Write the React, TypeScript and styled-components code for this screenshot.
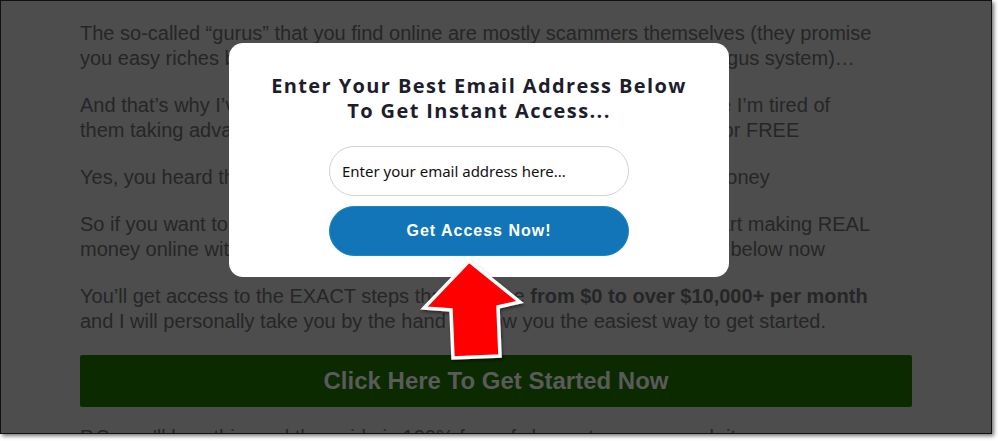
import React from 'react';
import styled, { createGlobalStyle } from 'styled-components';

const App = () => {
  return (
    <>
      <GlobalStyle />
      <Frame>
        <Content>
          <Para>
            The so-called “gurus” that you find online are mostly scammers themselves (they promise
            <br />
            you easy riches but instead they just want to sell you some overpriced bogus system)…
          </Para>
          <Para>
            And that’s why I’ve decided to step in and help out folks like you, because I’m tired of
            <br />
            them taking advantage of people, so I’m going to show you exactly how for FREE
          </Para>
          <Para>Yes, you heard that right, I’m going to show you precisely how to make money</Para>
          <Para>
            So if you want to stop wasting your time and money on fluff and finally start making REAL
            <br />
            money online without all the BS then all you have to do is click the button below now
          </Para>
          <Para>
            You’ll get access to the EXACT steps that took me <b>from $0 to over $10,000+ per month</b>
            <br />
            and I will personally take you by the hand &amp; show you the easiest way to get started.
          </Para>
          <GreenButton>Click Here To Get Started Now</GreenButton>
          <PostScript>P.S. you'll love this, and the guide is 100% free of charge to you, so grab it</PostScript>
        </Content>

        <Modal>
          <ModalTitle>
            Enter Your Best Email Address Below
            <br />
            To Get Instant Access...
          </ModalTitle>
          <EmailInput placeholder="Enter your email address here..." />
          <AccessButton>Get Access Now!</AccessButton>
        </Modal>

        <Arrow width="110" height="110" viewBox="0 0 110 110">
          <defs>
            <filter id="sh" x="-20%" y="-20%" width="140%" height="140%">
              <feDropShadow dx="1" dy="2" stdDeviation="1.5" floodColor="#000" floodOpacity="0.45" />
            </filter>
          </defs>
          <polygon
            points="54,6 105,47 83,52 85,101 38,103 36,55 9,53"
            fill="#ff0000"
            stroke="#ffffff"
            strokeWidth="3.5"
            strokeLinejoin="miter"
            filter="url(#sh)"
          />
        </Arrow>
      </Frame>
    </>
  );
}

export default App;

const GlobalStyle = createGlobalStyle`
  html, body {
    margin: 0;
    padding: 0;
    background: #ffffff;
  }
  body {
    width: 998px;
    height: 441px;
    overflow: hidden;
  }
`

const Frame = styled.div`
  position: relative;
  width: 992px;
  height: 434px;
  box-sizing: border-box;
  border: 1px solid #111;
  background: #4d4d4d;
  overflow: hidden;
  box-shadow: 2px 2px 4px rgba(0, 0, 0, 0.55);
`

const Content = styled.div`
  width: 832px;
  padding: 20px 0 0 79px;
  display: flex;
  flex-direction: column;
  gap: 22px;
`

const Para = styled.p`
  margin: 0;
  font-family: "Liberation Sans", Arial, sans-serif;
  font-size: 20px;
  line-height: 25px;
  color: #262626;
  white-space: nowrap;

  b {
    font-weight: 700;
  }
`

const PostScript = styled(Para)`
  margin-top: -4px;
`

const GreenButton = styled.div`
  height: 52px;
  margin-top: -1px;
  border-radius: 2px;
  background: #0b2a00;
  display: flex;
  align-items: center;
  justify-content: center;
  font-family: "Liberation Sans", Arial, sans-serif;
  font-weight: 700;
  font-size: 24px;
  color: #5a5a5a;
`

const Modal = styled.div`
  position: absolute;
  left: 228px;
  top: 42px;
  width: 500px;
  height: 234px;
  box-sizing: border-box;
  background: #ffffff;
  border-radius: 14px;
  display: flex;
  flex-direction: column;
  align-items: center;
  padding-top: 30px;
`

const ModalTitle = styled.h2`
  margin: 0 0 23px;
  font-family: "Open Sans", "Noto Sans", sans-serif;
  font-weight: 700;
  font-size: 20px;
  line-height: 25px;
  letter-spacing: 1.4px;
  text-align: center;
  color: #1d1d2c;
`

const EmailInput = styled.input`
  width: 300px;
  height: 50px;
  box-sizing: border-box;
  border: 1px solid #d2d2d2;
  border-radius: 25px;
  padding: 0 12px;
  margin-bottom: 10px;
  font-family: "Noto Sans", "Open Sans", sans-serif;
  font-size: 15px;
  color: #111;
  outline: none;

  &::placeholder {
    color: #111;
    opacity: 1;
  }
`

const AccessButton = styled.button`
  width: 300px;
  height: 50px;
  border: 1px solid #1589c4;
  border-radius: 25px;
  background: #1175b7;
  color: #ffffff;
  font-family: "Liberation Sans", Arial, sans-serif;
  font-weight: 700;
  font-size: 16px;
  letter-spacing: 1px;
  cursor: pointer;
`

const Arrow = styled.svg`
  position: absolute;
  left: 414px;
  top: 254px;
`
